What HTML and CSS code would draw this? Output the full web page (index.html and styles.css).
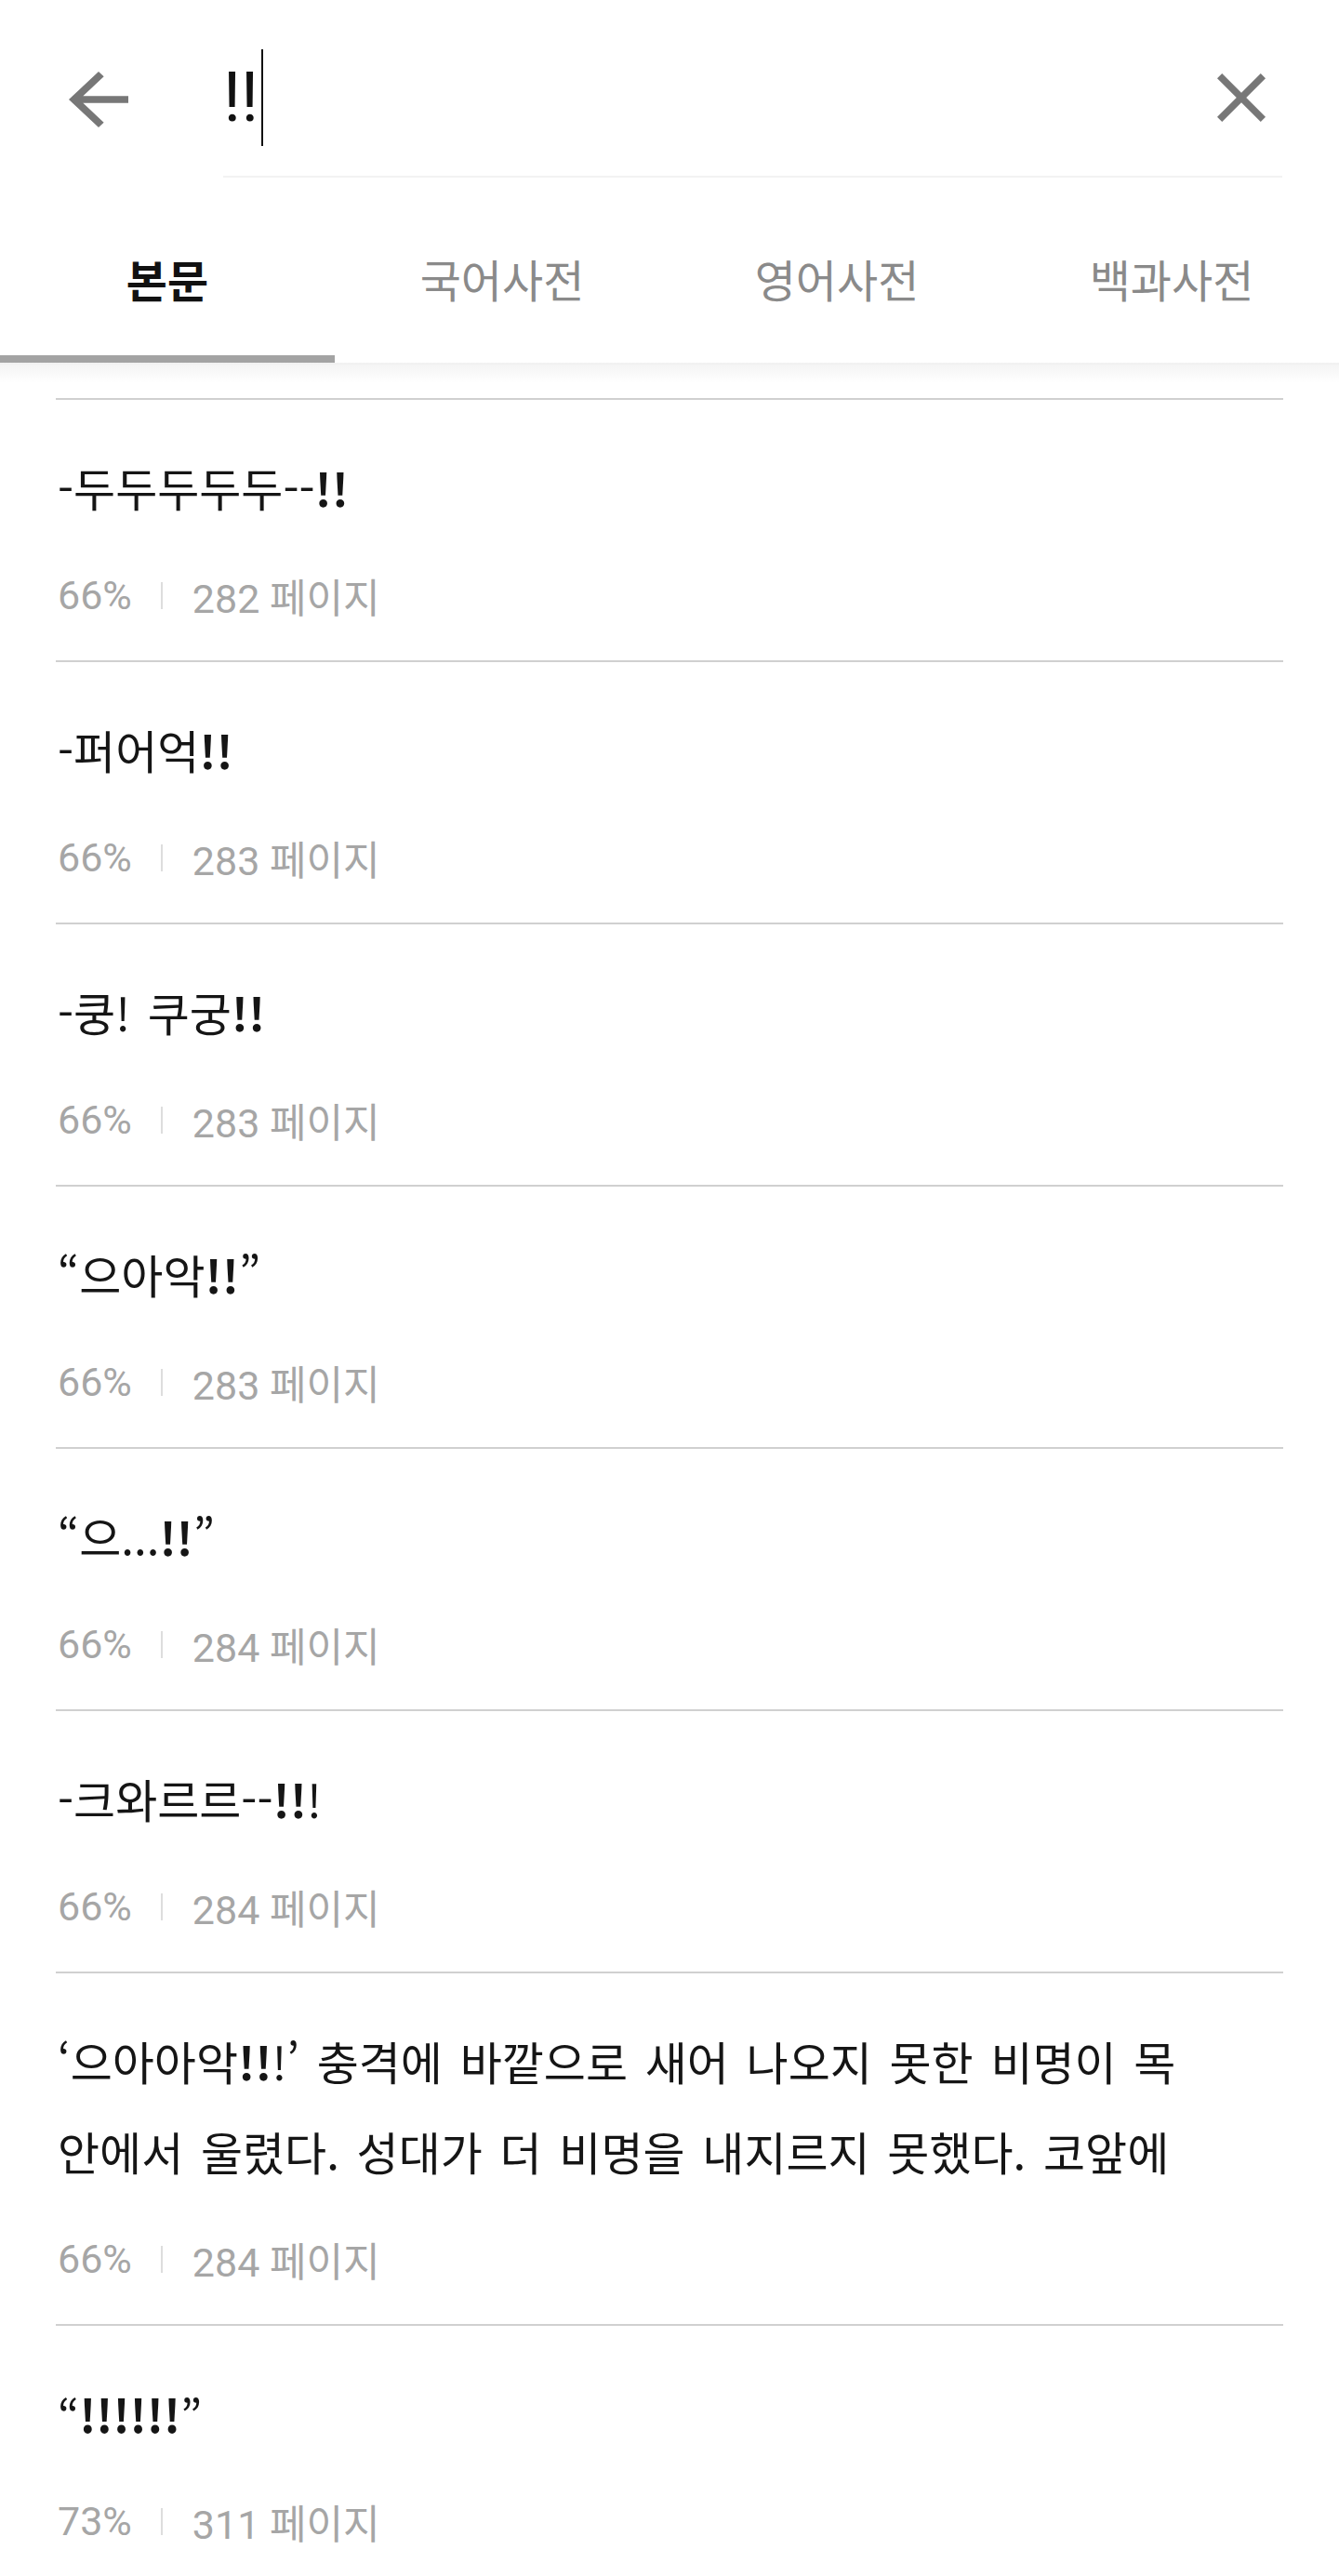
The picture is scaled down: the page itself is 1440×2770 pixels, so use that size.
FILE: index.html
```html
<!DOCTYPE html>
<html lang="ko">
<head>
    <meta charset="UTF-8">
    <meta name="viewport" content="width=device-width, initial-scale=1.0">
    <title>본문 검색</title>
    <link rel="stylesheet" href="styles.css">
</head>
<body>
    <header class="search-bar">
        <button class="icon-btn back-btn" aria-label="뒤로">
            <svg width="64" height="60" viewBox="4 4 16 16" preserveAspectRatio="none">
                <path d="M20 11H7.83l5.59-5.59L12 4l-8 8 8 8 1.41-1.41L7.83 13H20v-2z"/>
            </svg>
        </button>
        <div class="search-field">
            <span class="query">!!</span>
            <span class="caret"></span>
            <button class="icon-btn clear-btn" aria-label="지우기">
                <svg width="52" height="52" viewBox="5 5 14 14">
                    <path d="M19 6.41L17.59 5 12 10.59 6.41 5 5 6.41 10.59 12 5 17.59 6.41 19 12 13.41 17.59 19 19 17.59 13.41 12z"/>
                </svg>
            </button>
        </div>
    </header>

    <nav class="tabs">
        <div class="tab active">본문</div>
        <div class="tab">국어사전</div>
        <div class="tab">영어사전</div>
        <div class="tab">백과사전</div>
    </nav>

    <ul class="results">
        <li class="result">
            <p class="excerpt">-두두두두두--<b>!!</b></p>
            <div class="meta"><span>66%</span><span class="sep"></span><span>282 페이지</span></div>
        </li>
        <li class="result">
            <p class="excerpt">-퍼어억<b>!!</b></p>
            <div class="meta"><span>66%</span><span class="sep"></span><span>283 페이지</span></div>
        </li>
        <li class="result">
            <p class="excerpt">-쿵! 쿠궁<b>!!</b></p>
            <div class="meta"><span>66%</span><span class="sep"></span><span>283 페이지</span></div>
        </li>
        <li class="result">
            <p class="excerpt">“으아악<b>!!</b>”</p>
            <div class="meta"><span>66%</span><span class="sep"></span><span>283 페이지</span></div>
        </li>
        <li class="result">
            <p class="excerpt">“으...<b>!!</b>”</p>
            <div class="meta"><span>66%</span><span class="sep"></span><span>284 페이지</span></div>
        </li>
        <li class="result">
            <p class="excerpt">-크와르르--<b>!!</b>!</p>
            <div class="meta"><span>66%</span><span class="sep"></span><span>284 페이지</span></div>
        </li>
        <li class="result">
            <p class="excerpt">‘으아아악<b>!!</b>!’ 충격에 바깥으로 새어 나오지 못한 비명이 목 안에서 울렸다. 성대가 더 비명을 내지르지 못했다. 코앞에</p>
            <div class="meta"><span>66%</span><span class="sep"></span><span>284 페이지</span></div>
        </li>
        <li class="result">
            <p class="excerpt">“<b>!!!!!!</b>”</p>
            <div class="meta"><span>73%</span><span class="sep"></span><span>311 페이지</span></div>
        </li>
    </ul>
</body>
</html>
```

FILE: styles.css
```css
html, body {
    margin: 0;
    padding: 0;
}

body {
    background-color: #fff;
    font-family: "Noto Sans CJK KR", "Noto Sans", sans-serif;
    color: #151515;
    height: 2770px;
    overflow: hidden;
}

.icon-btn {
    background: none;
    border: none;
    padding: 0;
    cursor: pointer;
    display: flex;
}

.icon-btn svg {
    fill: #777;
}

/* 검색창 */
.search-bar {
    display: flex;
    height: 192px;
    padding: 0 61px 0 74px;
}

.back-btn {
    margin-top: 77px;
    margin-right: 102px;
    height: 60px;
}

.search-field {
    flex: 1;
    display: flex;
    align-items: center;
    box-sizing: border-box;
    height: 191px;
    padding-top: 20px;
    border-bottom: 2px solid #f2f2f2;
}

.query {
    font-family: Roboto, sans-serif;
    font-size: 74px;
    color: #111;
}

.caret {
    width: 2px;
    height: 104px;
    margin-left: 3px;
    background-color: #111;
}

.clear-btn {
    margin-left: auto;
    margin-right: 18px;
}

/* 탭 */
.tabs {
    display: flex;
    position: relative;
    height: 198px;
    border-bottom: 2px solid #ccc;
}

.tabs::after {
    content: "";
    position: absolute;
    left: 0;
    right: 0;
    top: 100%;
    height: 22px;
    background: linear-gradient(#f3f3f3, rgba(255, 255, 255, 0));
}

.tab {
    flex: 1;
    position: relative;
    display: flex;
    align-items: center;
    justify-content: center;
    padding-top: 16px;
    font-size: 48px;
    color: #8a8a8a;
}

.tab.active {
    color: #111;
    font-weight: 700;
}

.tab.active::after {
    content: "";
    position: absolute;
    left: 0;
    right: 0;
    bottom: 0;
    height: 8px;
    background-color: #a3a3a3;
}

/* 검색 결과 */
.results {
    list-style: none;
    margin: 0;
    padding: 36px 60px 0;
}

.result {
    border-top: 2px solid #d0d0d0;
    padding: 45px 0 45px 2px;
}

.excerpt {
    margin: 0;
    font-size: 49px;
    line-height: 97px;
    word-spacing: 5px;
    word-break: keep-all;
}

.excerpt b {
    font-weight: 700;
}

.meta {
    display: flex;
    align-items: center;
    height: 50px;
    margin-top: 43px;
    font-family: Roboto, "Noto Sans CJK KR", sans-serif;
    font-size: 43px;
    color: #a6a6a6;
}

.sep {
    width: 2px;
    height: 29px;
    margin: 0 32px 0 31px;
    background-color: #ddd;
}
```
